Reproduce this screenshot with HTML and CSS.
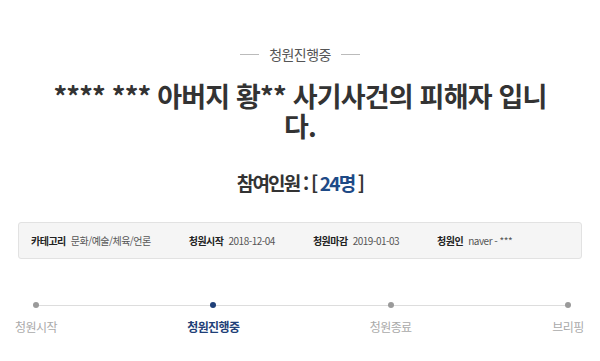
FILE: index.html
```html
<!DOCTYPE html>
<html lang="ko">
<head>
<meta charset="utf-8">
<link rel="stylesheet" href="styles.css">
</head>
<body>
<main class="page">
  <div class="status"><span class="status-line"></span><span class="status-text">청원진행중</span><span class="status-line"></span></div>
  <h1 class="title">**** *** 아버지 황** 사기사건의 피해자 입니다.</h1>
  <p class="count">참여인원 : [ <span class="count-num">24명</span> ]</p>
  <ul class="info">
    <li class="info-item"><span class="info-label">카테고리</span><span class="info-value">문화/예술/체육/언론</span></li>
    <li class="info-item"><span class="info-label">청원시작</span><span class="info-value">2018-12-04</span></li>
    <li class="info-item"><span class="info-label">청원마감</span><span class="info-value">2019-01-03</span></li>
    <li class="info-item"><span class="info-label">청원인</span><span class="info-value">naver - ***</span></li>
  </ul>
  <ol class="steps">
    <li class="step"><span class="dot"></span><span class="step-label">청원시작</span></li>
    <li class="step step-active"><span class="dot"></span><span class="step-label">청원진행중</span></li>
    <li class="step"><span class="dot"></span><span class="step-label">청원종료</span></li>
    <li class="step"><span class="dot"></span><span class="step-label">브리핑</span></li>
  </ol>
</main>
</body>
</html>
```

FILE: styles.css
```css
html, body {
  margin: 0;
  padding: 0;
  background: #fff;
}
body {
  font-family: "Noto Sans CJK KR", "Noto Sans", sans-serif;
  color: #333;
  width: 600px;
  height: 361px;
  overflow: hidden;
}
.page {
  display: flex;
  flex-direction: column;
  align-items: stretch;
}
.status {
  margin-top: 45px;
  height: 18px;
  display: flex;
  justify-content: center;
  align-items: center;
  gap: 10px;
}
.status-line {
  width: 19px;
  height: 1px;
  background: #bbb;
}
.status-text {
  font-size: 14px;
  line-height: 18px;
  color: #555;
  letter-spacing: -0.6px;
}
.title {
  margin: 18px auto 0;
  width: 505px;
  font-size: 27px;
  line-height: 30px;
  font-weight: 700;
  text-align: center;
  color: #333;
  letter-spacing: -0.8px;
}
.count {
  margin: 30px 0 0;
  text-align: center;
  font-size: 19px;
  line-height: 24px;
  font-weight: 700;
  color: #333;
  letter-spacing: -1.8px;
}
.count-num {
  color: #1e4a86;
}
.info {
  list-style: none;
  margin: 27px 18px 0;
  padding: 0 12px;
  height: 37px;
  box-sizing: border-box;
  border: 1px solid #e2e2e2;
  border-radius: 3px;
  background: #f5f5f5;
  display: flex;
  align-items: center;
  gap: 38px;
}
.info-item {
  display: flex;
  align-items: baseline;
  gap: 5px;
  font-size: 10px;
  line-height: 14px;
  letter-spacing: -0.5px;
}
.info-label {
  font-weight: 700;
  color: #222;
}
.info-value {
  color: #555;
}
.steps {
  list-style: none;
  position: relative;
  margin: 43px 2px 0 6px;
  padding: 0;
  display: flex;
  justify-content: space-between;
}
.steps::before {
  content: "";
  position: absolute;
  left: 30px;
  right: 30px;
  top: 2.5px;
  height: 1px;
  background: #ddd;
}
.step {
  width: 60px;
  display: flex;
  flex-direction: column;
  align-items: center;
  gap: 11px;
  position: relative;
}
.dot {
  width: 6px;
  height: 6px;
  border-radius: 50%;
  background: #9a9a9a;
}
.step-label {
  font-size: 12px;
  line-height: 16px;
  color: #aaa;
  letter-spacing: -0.6px;
  white-space: nowrap;
}
.step-active .dot {
  background: #1f3f78;
}
.step-active .step-label {
  color: #1f3f78;
  font-weight: 700;
}
```
